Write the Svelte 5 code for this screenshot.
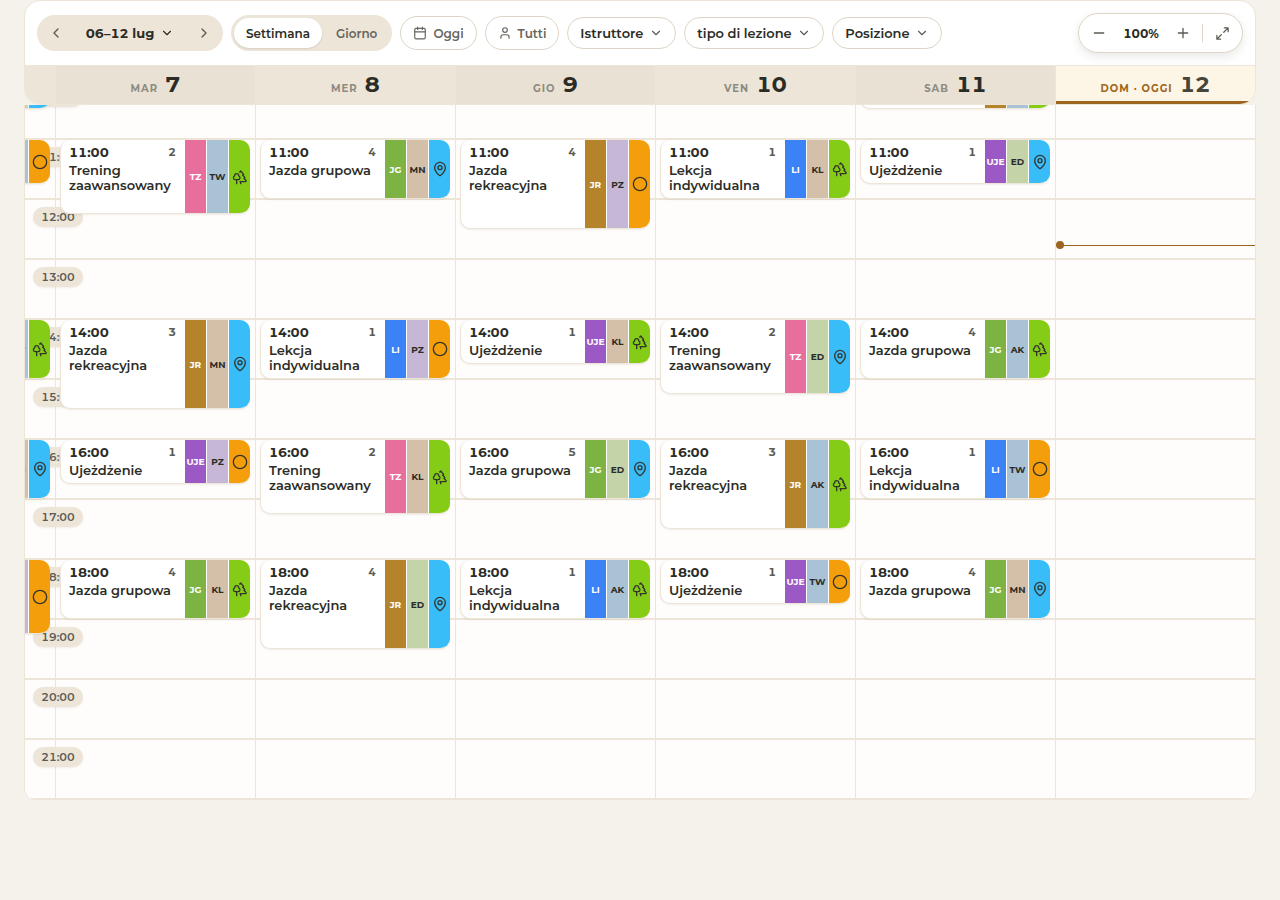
<script lang="ts">
  interface Lesson {
    start: string
    minutes: number
    kind: string
    count: number
    horse: string
    place: string
  }

  interface Day {
    name: string
    date: number
    today?: boolean
    lessons: Lesson[]
  }

  const FIRST_HOUR = 9
  const LAST_HOUR = 21

  const kinds: Record<string, string> = {
    TZ: 'Trening zaawansowany',
    JG: 'Jazda grupowa',
    JR: 'Jazda rekreacyjna',
    LI: 'Lekcja indywidualna',
    UJE: 'Ujeżdżenie',
  }

  const filters = ['Istruttore', 'tipo di lezione', 'Posizione']

  const hours = Array.from({ length: LAST_HOUR - FIRST_HOUR + 1 }, (_, i) => `${FIRST_HOUR + i}:00`)

  function lesson(start: string, minutes: number, kind: string, count: number, horse: string, place: string): Lesson {
    return { start, minutes, kind, count, horse, place }
  }

  const monday: Lesson[] = [
    lesson('9:00', 90, 'JR', 3, 'ED', 'pin'),
    lesson('11:00', 45, 'UJE', 1, 'AK', 'ring'),
    lesson('14:00', 60, 'JG', 4, 'TW', 'trees'),
    lesson('16:00', 60, 'LI', 1, 'MN', 'pin'),
    lesson('18:00', 75, 'TZ', 2, 'PZ', 'ring'),
  ]

  const days: Day[] = [
    {
      name: 'mar',
      date: 7,
      lessons: [
        lesson('11:00', 75, 'TZ', 2, 'TW', 'trees'),
        lesson('14:00', 90, 'JR', 3, 'MN', 'pin'),
        lesson('16:00', 45, 'UJE', 1, 'PZ', 'ring'),
        lesson('18:00', 60, 'JG', 4, 'KL', 'trees'),
      ],
    },
    {
      name: 'mer',
      date: 8,
      lessons: [
        lesson('11:00', 60, 'JG', 4, 'MN', 'pin'),
        lesson('14:00', 60, 'LI', 1, 'PZ', 'ring'),
        lesson('16:00', 75, 'TZ', 2, 'KL', 'trees'),
        lesson('18:00', 90, 'JR', 4, 'ED', 'pin'),
      ],
    },
    {
      name: 'gio',
      date: 9,
      lessons: [
        lesson('11:00', 90, 'JR', 4, 'PZ', 'ring'),
        lesson('14:00', 45, 'UJE', 1, 'KL', 'trees'),
        lesson('16:00', 60, 'JG', 5, 'ED', 'pin'),
        lesson('18:00', 60, 'LI', 1, 'AK', 'trees'),
      ],
    },
    {
      name: 'ven',
      date: 10,
      lessons: [
        lesson('11:00', 60, 'LI', 1, 'KL', 'trees'),
        lesson('14:00', 75, 'TZ', 2, 'ED', 'pin'),
        lesson('16:00', 90, 'JR', 3, 'AK', 'trees'),
        lesson('18:00', 45, 'UJE', 1, 'TW', 'ring'),
      ],
    },
    {
      name: 'sab',
      date: 11,
      lessons: [
        lesson('9:00', 90, 'JR', 3, 'AK', 'trees'),
        lesson('11:00', 45, 'UJE', 1, 'ED', 'pin'),
        lesson('14:00', 60, 'JG', 4, 'AK', 'trees'),
        lesson('16:00', 60, 'LI', 1, 'TW', 'ring'),
        lesson('18:00', 60, 'JG', 4, 'MN', 'pin'),
      ],
    },
    { name: 'dom', date: 12, today: true, lessons: [] },
  ]

  let view = $state<'week' | 'day'>('week')
  let zoom = $state(100)

  // one grid row per quarter of an hour
  function rowOf(item: Lesson): string {
    const [h, m] = item.start.split(':').map(Number)
    const first = ((h - FIRST_HOUR) * 60 + m) / 15 + 1
    return `${first} / span ${item.minutes / 15}`
  }

  function nowOffset(time: string): number {
    const [h, m] = time.split(':').map(Number)
    return (h - FIRST_HOUR) * 60 + m
  }
</script>

{#snippet icon(d: string, size: number)}
  <svg class="icon" width={size} height={size} viewBox="0 0 24 24" aria-hidden="true"><path {d} /></svg>
{/snippet}

{#snippet placeIcon(place: string)}
  <svg class="icon dark" width="16" height="16" viewBox="0 0 24 24" aria-hidden="true">
    {#if place === 'pin'}
      <path d="M20 10c0 5-5.5 10.2-7.4 11.8a1 1 0 0 1-1.2 0C9.5 20.2 4 15 4 10a8 8 0 0 1 16 0Z" />
      <circle cx="12" cy="10" r="3" />
    {:else if place === 'ring'}
      <circle cx="12" cy="12" r="10" />
    {:else}
      <path d="M10 10v.2A3 3 0 0 1 8.9 16H5a3 3 0 0 1-1-5.8V10a3 3 0 0 1 6 0Z" />
      <path d="M7 16v6M13 19v3" />
      <path d="M12 19h8.3a1 1 0 0 0 .7-1.7L18 14h.3a1 1 0 0 0 .7-1.7L16 9h.2a1 1 0 0 0 .8-1.7L13 3l-1.4 1.5" />
    {/if}
  </svg>
{/snippet}

{#snippet card(item: Lesson)}
  <article class="lesson" style:grid-row={rowOf(item)}>
    <div class="info">
      <div class="top">
        <time>{item.start}</time>
        <span class="count">{item.count}</span>
      </div>
      <div class="title">{kinds[item.kind]}</div>
    </div>
    <div class="strip kind {item.kind}">{item.kind}</div>
    <div class="strip {item.horse}">{item.horse}</div>
    <div class="strip {item.place}">{@render placeIcon(item.place)}</div>
  </article>
{/snippet}

<main class="calendar">
  <div class="head-wrap">
    <header class="head">
      <div class="toolbar">
        <div class="range">
          <button type="button" class="arrow" aria-label="Settimana precedente">{@render icon('m15 18-6-6 6-6', 16)}</button>
          <button type="button" class="dates">06–12 lug {@render icon('m6 9 6 6 6-6', 14)}</button>
          <button type="button" class="arrow" aria-label="Settimana successiva">{@render icon('m9 18 6-6-6-6', 16)}</button>
        </div>

        <div class="switch">
          <button type="button" class:active={view === 'week'} onclick={() => (view = 'week')}>Settimana</button>
          <button type="button" class:active={view === 'day'} onclick={() => (view = 'day')}>Giorno</button>
        </div>

        <button type="button" class="outline">
          <svg class="icon" width="14" height="14" viewBox="0 0 24 24" aria-hidden="true">
            <rect x="3" y="4" width="18" height="18" rx="2" />
            <path d="M8 2v4M16 2v4M3 10h18" />
          </svg>
          Oggi
        </button>
        <button type="button" class="outline">
          <svg class="icon" width="14" height="14" viewBox="0 0 24 24" aria-hidden="true">
            <circle cx="12" cy="7" r="4" />
            <path d="M19 21v-2a4 4 0 0 0-4-4H9a4 4 0 0 0-4 4v2" />
          </svg>
          Tutti
        </button>

        {#each filters as filter (filter)}
          <label class="filter">
            <select aria-label={filter}>
              <option>{filter}</option>
            </select>
            {@render icon('m6 9 6 6 6-6', 14)}
          </label>
        {/each}

        <div class="zoom">
          <button type="button" aria-label="Riduci" onclick={() => (zoom -= 10)}>{@render icon('M5 12h14', 16)}</button>
          <span class="level">{zoom}%</span>
          <button type="button" aria-label="Ingrandisci" onclick={() => (zoom += 10)}>{@render icon('M5 12h14M12 5v14', 16)}</button>
          <span class="divider"></span>
          <button type="button" aria-label="Schermo intero">{@render icon('M15 3h6v6M21 3l-7 7M3 21l7-7M9 21H3v-6', 15)}</button>
        </div>
      </div>

      <div class="day-names">
        <div class="edge"></div>
        {#each days as day (day.date)}
          <div class="day-name" class:today={day.today}>
            <span class="weekday">{day.name}{day.today ? ' · oggi' : ''}</span>
            <span class="number">{day.date}</span>
          </div>
        {/each}
      </div>
    </header>
  </div>

  <div class="body">
    <div class="hours">
      {#each hours as hour (hour)}
        <div class="hour"><span class="hour-label">{hour}</span></div>
      {/each}
    </div>
    <div class="days">
      <div class="day edge">
        {#each monday as item (item.start)}
          {@render card(item)}
        {/each}
      </div>
      {#each days as day (day.date)}
        <div class="day">
          {#each day.lessons as item (item.start)}
            {@render card(item)}
          {/each}
          {#if day.today}
            <div class="now" style:top="{nowOffset('12:45')}px"></div>
          {/if}
        </div>
      {/each}
    </div>
  </div>
</main>

<style>
  :global(body) {
    background: #f5f2eb;
  }

  .calendar {
    color: #2c2c26;
    font-family: Montserrat, Inter, 'Open Sans', sans-serif;
    font-size: 13px;
    font-variant-numeric: tabular-nums;
    margin: 0 24px;
  }

  .calendar * {
    box-sizing: border-box;
  }

  button,
  select {
    background: none;
    border: 0;
    color: inherit;
    cursor: pointer;
    font: inherit;
    font-variant-numeric: tabular-nums;
    margin: 0;
    padding: 0;
  }

  .icon {
    display: block;
    fill: none;
    flex: none;
    stroke: currentColor;
    stroke-linecap: round;
    stroke-linejoin: round;
    stroke-width: 2;
  }

  .head-wrap {
    background: #f5f2eb;
    position: sticky;
    top: 0;
    z-index: 5;
  }

  .head {
    background: #fff;
    border: 1px solid #ece5d8;
    border-radius: 16px;
    overflow: hidden;
  }

  .toolbar {
    align-items: center;
    display: flex;
    gap: 8px;
    height: 64px;
    padding: 0 12px;
  }

  .range,
  .switch {
    align-items: center;
    background: #ece5d8;
    border-radius: 18px;
    display: flex;
    height: 36px;
  }

  .arrow {
    align-items: center;
    color: #5c5c54;
    display: flex;
    height: 36px;
    justify-content: center;
    width: 38px;
  }

  .dates {
    align-items: center;
    display: flex;
    font-weight: 700;
    gap: 6px;
    justify-content: center;
    width: 110px;
  }

  .switch {
    gap: 2px;
    padding: 0 3px;
  }

  .switch button {
    border-radius: 15px;
    color: #66665e;
    font-size: 12px;
    font-weight: 600;
    height: 30px;
    padding: 0 12px;
  }

  .switch .active {
    background: #fff;
    box-shadow: 0 1px 2px rgb(60 50 30 / 12%);
    color: #2c2c26;
  }

  .outline {
    align-items: center;
    border: 1px solid #ddd5c5;
    border-radius: 17px;
    color: #66665e;
    display: flex;
    font-size: 12px;
    font-weight: 600;
    gap: 6px;
    height: 34px;
    padding: 0 12px;
  }

  .filter {
    align-items: center;
    border: 1px solid #ddd5c5;
    border-radius: 16px;
    display: flex;
    font-weight: 600;
    gap: 5px;
    height: 32px;
    padding: 0 12px;
  }

  .filter select {
    appearance: none;
  }

  .filter .icon {
    color: #5c5c54;
  }

  .zoom {
    align-items: center;
    background: #fff;
    border: 1px solid #ddd5c5;
    border-radius: 20px;
    box-shadow: 0 4px 10px rgb(60 50 30 / 10%);
    display: flex;
    height: 40px;
    margin-left: auto;
    padding: 0 3px;
  }

  .zoom button {
    align-items: center;
    color: #5c5c54;
    display: flex;
    height: 32px;
    justify-content: center;
    width: 34px;
  }

  .level {
    font-size: 12px;
    font-weight: 700;
    text-align: center;
    width: 50px;
  }

  .divider {
    background: #ddd5c5;
    height: 18px;
    margin: 0 2px;
    width: 1px;
  }

  .day-names {
    background: #ece5d8;
    display: flex;
    height: 39px;
  }

  .edge {
    flex: 0 0 30px;
  }

  .day-name {
    align-items: baseline;
    border-left: 1px solid #ece5d8;
    border-top: 1px solid #ece5d8;
    display: flex;
    flex: 1 1 0;
    gap: 7px;
    justify-content: center;
    line-height: 38px;
  }

  .day-name:nth-child(even) {
    background: #e9e1d4;
  }

  .weekday {
    color: #8c8b82;
    font-size: 10px;
    font-weight: 700;
    letter-spacing: 1px;
    text-transform: uppercase;
  }

  .number {
    font-size: 22px;
    font-weight: 700;
  }

  .day-name.today {
    background: #fdf5e6;
    background-clip: padding-box;
    box-shadow: inset 0 -3px #9c6520;
  }

  .today .weekday {
    color: #9c6520;
  }

  .today .number {
    color: #46453a;
  }

  /* the first hours lie scrolled under the sticky header */
  .body {
    background: #fffdfb;
    border: solid #ece5d8;
    border-radius: 0 0 12px 12px;
    border-width: 0 1px;
    display: grid;
    margin-top: -85px;
    overflow: hidden;
  }

  .hours,
  .days {
    grid-area: 1 / 1;
  }

  .hour {
    border-bottom: 2px solid #ece5d8;
    height: 60px;
    padding: 7px 8px;
  }

  .hour-label {
    background: #ece5d8;
    border-radius: 10px;
    box-shadow: 0 1px 2px rgb(60 50 30 / 8%);
    color: #5c5c54;
    display: block;
    font-size: 11px;
    font-weight: 600;
    line-height: 20px;
    position: relative;
    text-align: center;
    width: 50px;
    z-index: 1;
  }

  .days {
    display: flex;
  }

  .day {
    border-left: 1px solid #ece5d8;
    display: grid;
    flex: 1 1 0;
    grid-template-rows: repeat(52, 15px);
    min-width: 0;
    padding: 0 5px 0 4px;
    position: relative;
  }

  .day.edge {
    border-left: 0;
    flex: 0 0 30px;
    justify-content: end;
    overflow: hidden;
    padding-left: 0;
  }

  .edge .lesson {
    width: 190px;
  }

  .lesson {
    background: #fff;
    border: solid #ece5d8;
    border-radius: 10px;
    border-width: 0 0 1px 1px;
    box-shadow: 0 1px 2px rgb(60 50 30 / 8%);
    display: flex;
    gap: 1px;
    margin-bottom: 1px;
    overflow: hidden;
    position: relative;
    z-index: 2;
  }

  .info {
    flex: 1;
    min-width: 0;
    padding: 4px 8px 0;
  }

  .top {
    align-items: center;
    display: flex;
    font-weight: 700;
    justify-content: space-between;
    line-height: 16px;
    margin-bottom: 3px;
  }

  .count {
    color: #5c5c54;
    font-size: 11px;
  }

  .title {
    font-weight: 600;
    line-height: 15px;
  }

  .strip {
    align-items: center;
    display: flex;
    flex: 0 0 21px;
    font-size: 9px;
    font-weight: 700;
    justify-content: center;
  }

  .kind {
    color: #fff;
  }

  .dark {
    stroke: #35352c;
  }

  .TZ { background: #e86e9e; }
  .JG { background: #7cb342; }
  .JR { background: #b4832a; }
  .LI { background: #3b82f6; }
  .UJE { background: #9b59c6; }
  .TW, .AK { background: #a9c2d5; }
  .MN, .KL { background: #d4bfa9; }
  .PZ { background: #c5b7d5; }
  .ED { background: #c5d3a9; }
  .trees { background: #84cc16; }
  .pin { background: #38bdf8; }
  .ring { background: #f59e0b; }

  .now {
    background: #9c6520;
    height: 1px;
    left: 0;
    position: absolute;
    right: 0;
    z-index: 3;
  }

  .now::before {
    background: #9c6520;
    border-radius: 50%;
    content: '';
    height: 8px;
    left: 0;
    position: absolute;
    top: -4px;
    width: 8px;
  }
</style>
